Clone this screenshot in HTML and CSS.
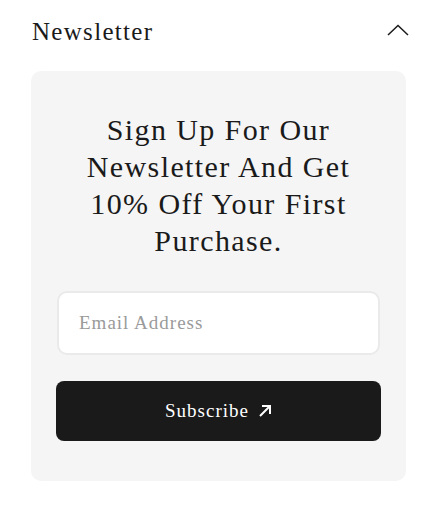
FILE: index.html
```html
<!DOCTYPE html>
<html>
<head>
<meta charset="utf-8">
<link rel="stylesheet" href="styles.css">
</head>
<body>
<section class="panel">
  <div class="panel-head">
    <h2 class="panel-title">Newsletter</h2>
    <svg class="chevron" width="22" height="12" viewBox="0 0 22 12"><path d="M1 11 L11 1.5 L21 11" fill="none" stroke="#1a1a1a" stroke-width="1.5"/></svg>
  </div>
  <div class="card">
    <p class="card-title">Sign Up For Our Newsletter And Get 10% Off Your First Purchase.</p>
    <input class="email" type="text" placeholder="Email Address">
    <button class="subscribe">Subscribe
      <svg width="14" height="14" viewBox="0 0 14 14"><path d="M2 12 L12 2 M4 2 H12 V10" fill="none" stroke="#fff" stroke-width="2"/></svg>
    </button>
  </div>
</section>
</body>
</html>
```
FILE: styles.css
```css
* { box-sizing: border-box; }
body {
  margin: 0;
  background: #fff;
  font-family: "Liberation Serif", serif;
  color: #1a1a1a;
}
.panel {
  padding: 0 30px 0 31px;
}
.panel-head {
  height: 71px;
  display: flex;
  align-items: center;
  justify-content: space-between;
  padding: 0 0 7px 1px;
}
.panel-title {
  margin: 0;
  font-weight: normal;
  font-size: 25px;
  letter-spacing: 1.3px;
}
.chevron { margin-right: -3px; margin-top: -4px; }
.card {
  background: #f5f5f5;
  border-radius: 10px;
  padding: 40px 25px 40px;
  display: flex;
  flex-direction: column;
}
.card-title {
  margin: 0 0 32px;
  text-align: center;
  font-size: 30px;
  line-height: 37px;
  padding: 0 10px;
  letter-spacing: 1.4px;
}
.email {
  height: 64px;
  border: 2px solid #eaeaea;
  border-radius: 10px;
  background: #fff;
  padding: 0 20px;
  font-family: "Liberation Serif", serif;
  font-size: 19px;
  letter-spacing: 1px;
  color: #1a1a1a;
  margin: 0 1px;
  outline: none;
}
.email::placeholder { color: #9a9a9a; }
.subscribe {
  margin-top: 26px;
  height: 60px;
  border: none;
  border-radius: 8px;
  background: #1a1a1a;
  color: #fff;
  font-family: "Liberation Serif", serif;
  font-size: 19px;
  letter-spacing: 1px;
  display: flex;
  align-items: center;
  justify-content: center;
  gap: 9px;
}
```
